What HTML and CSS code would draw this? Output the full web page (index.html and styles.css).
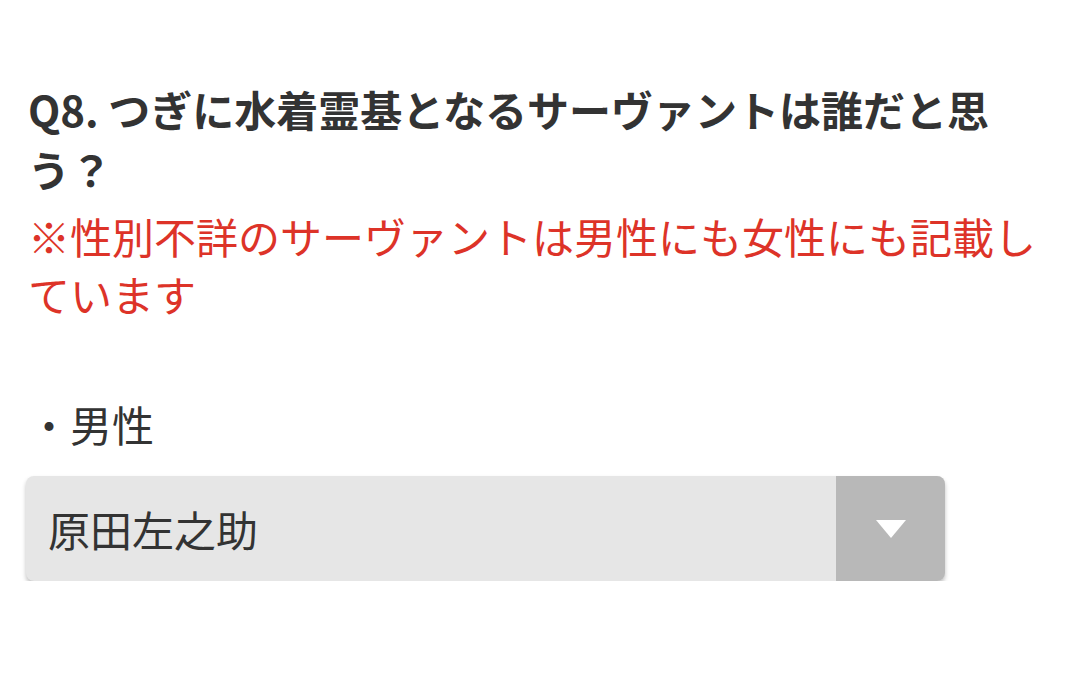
FILE: index.html
```html
<!DOCTYPE html>
<html lang="ja">
<head>
<meta charset="utf-8">
<title>Q8</title>
<link rel="stylesheet" href="styles.css">
</head>
<body>
<main class="question">
  <h2 class="question-title">Q8. つぎに水着霊基となるサーヴァントは誰だと思う？</h2>
  <p class="question-note">※性別不詳のサーヴァントは男性にも女性にも記載しています</p>
  <p class="group-label">・男性</p>
  <div class="select">
    <span class="select-value">原田左之助</span>
    <span class="select-button">
      <svg width="32" height="20" viewBox="0 0 32 20"><path d="M1 1h30L16 19z" fill="#fff"/></svg>
    </span>
  </div>
</main>
</body>
</html>
```

FILE: styles.css
```css
html, body {
  margin: 0;
  padding: 0;
  background: #fff;
}

body {
  font-family: "Noto Sans CJK JP", "Noto Sans", sans-serif;
  color: #333;
}

.question {
  width: 1024px;
  padding: 79px 0 0 28px;
}

.question-title {
  margin: 0;
  font-size: 42px;
  line-height: 60px;
  font-weight: 700;
  color: #333;
}

.question-note {
  margin: 8px 0 0;
  font-size: 42px;
  line-height: 58px;
  color: #dd3328;
}

.group-label {
  margin: 72px 0 0;
  font-size: 42px;
  line-height: 58px;
  color: #333;
}

.select {
  display: flex;
  width: 919px;
  height: 105px;
  margin: 23px 0 0 -2px;
  border-radius: 8px;
  background: #e6e6e6;
  box-shadow: 0 3px 4px rgba(0, 0, 0, 0.25);
  overflow: hidden;
}

.select-value {
  flex: 1;
  display: flex;
  align-items: center;
  padding-left: 22px;
  font-size: 42px;
  color: #333;
}

.select-button {
  width: 109px;
  display: flex;
  align-items: center;
  justify-content: center;
  background: #b8b8b8;
}
```
